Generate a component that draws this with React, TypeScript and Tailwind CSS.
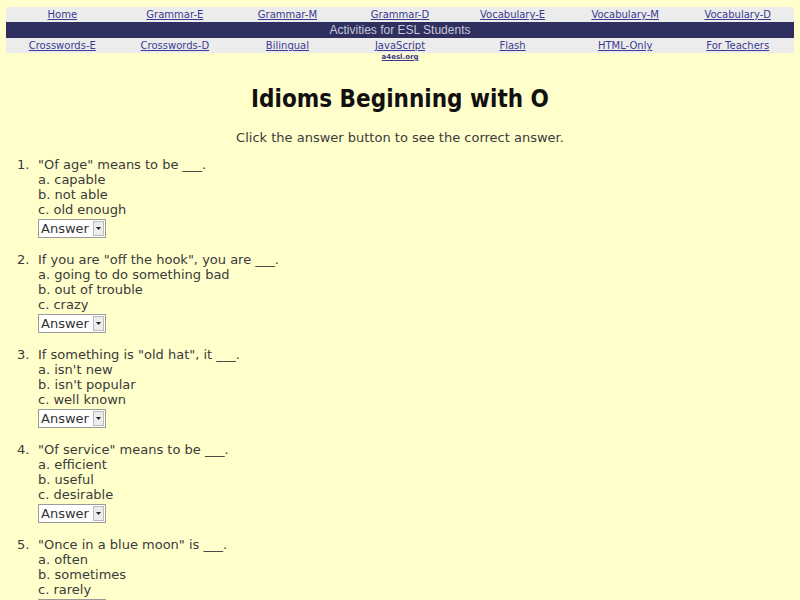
const navTop = ["Home", "Grammar-E", "Grammar-M", "Grammar-D", "Vocabulary-E", "Vocabulary-M", "Vocabulary-D"];
const navBottom = ["Crosswords-E", "Crosswords-D", "Bilingual", "JavaScript", "Flash", "HTML-Only", "For Teachers"];

const questions = [
  { q: '"Of age" means to be ___.', a: ["capable", "not able", "old enough"] },
  { q: 'If you are "off the hook", you are ___.', a: ["going to do something bad", "out of trouble", "crazy"] },
  { q: 'If something is "old hat", it ___.', a: ["isn't new", "isn't popular", "well known"] },
  { q: '"Of service" means to be ___.', a: ["efficient", "useful", "desirable"] },
  { q: '"Once in a blue moon" is ___.', a: ["often", "sometimes", "rarely"] },
];

function NavRow({ items }: { items: string[] }) {
  return (
    <div className="grid h-[15px] grid-cols-7 items-center bg-[#ececec]">
      {items.map((item) => (
        <div key={item} className="text-center text-[10px] leading-[15px]">
          <a href="#" className="text-[#3b3b8f] underline">
            {item}
          </a>
        </div>
      ))}
    </div>
  );
}

function AnswerSelect() {
  return (
    <div className="mt-[2px] flex h-[19px] w-[68px] items-center border border-[#9a9a9a] bg-white pl-[2px]">
      <span className="flex-1 text-[13px] leading-none text-[#333]">Answer</span>
      <span className="mr-[1px] flex h-[15px] w-[11px] items-center justify-center border border-[#bbb] bg-[#ececec]">
        <svg width="5" height="3" viewBox="0 0 5 3">
          <path d="M0 0h5L2.5 3z" fill="#222" />
        </svg>
      </span>
    </div>
  );
}

export default function App() {
  return (
    <div className="min-h-[600px] bg-[#ffffcc] font-['DejaVu_Sans',Verdana,sans-serif] text-[#3a3a3a]">
      <div className="px-[6px] pt-[7px]">
        <NavRow items={navTop} />
        <div className="h-[16px] bg-[#2f2f60] text-center font-['Liberation_Sans',Arial,sans-serif] text-[12px] leading-[16px] text-[#c8c8d8]">
          Activities for ESL Students
        </div>
        <NavRow items={navBottom} />
        <div className="grid grid-cols-7">
          <div className="col-start-4 text-center text-[7px] leading-[9px] font-bold">
            <a href="#" className="text-[#3b3b8f] underline">a4esl.org</a>
          </div>
        </div>
      </div>

      <h1 className="mt-[22px] text-center font-['DejaVu_Sans_Condensed','DejaVu_Sans',sans-serif] text-[24px] leading-[30px] font-bold text-[#111]">
        Idioms Beginning with O
      </h1>

      <p className="mt-[16px] text-center text-[13px] leading-[15px]">
        Click the answer button to see the correct answer.
      </p>

      <ol className="mt-[12px] pl-[17px]">
        {questions.map((item, i) => (
          <li key={i} className="mb-[14px] flex text-[13px] leading-[15px]">
            <span className="w-[21px]">{i + 1}.</span>
            <div>
              <div>{item.q}</div>
              {item.a.map((ans, j) => (
                <div key={j}>
                  {"abc"[j]}. {ans}
                </div>
              ))}
              <AnswerSelect />
            </div>
          </li>
        ))}
      </ol>
    </div>
  );
}
